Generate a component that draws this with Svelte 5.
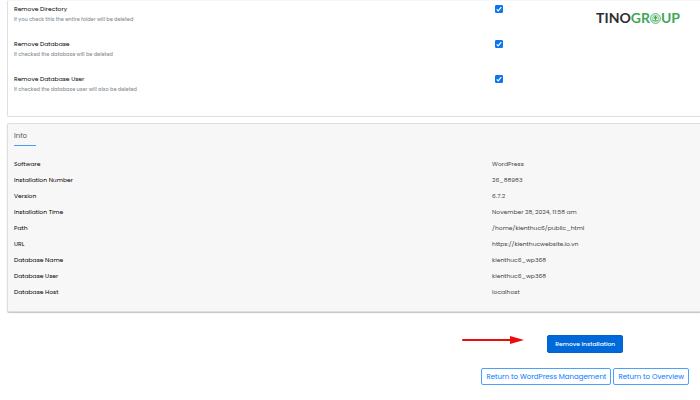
<script>
  let options = $state([
    { id: 'remove-dir', label: 'Remove Directory', hint: 'If you check this the entire folder will be deleted', checked: true },
    { id: 'remove-db', label: 'Remove Database', hint: 'If checked the database will be deleted', checked: true },
    { id: 'remove-dbuser', label: 'Remove Database User', hint: 'If checked the database user will also be deleted', checked: true }
  ]);

  const info = [
    ['Software', 'WordPress'],
    ['Installation Number', '26_88983'],
    ['Version', '6.7.2'],
    ['Installation Time', 'November 28, 2024, 11:58 am'],
    ['Path', '/home/kienthuc6/public_html'],
    ['URL', 'https://kienthucwebsite.io.vn'],
    ['Database Name', 'kienthuc6_wp368'],
    ['Database User', 'kienthuc6_wp368'],
    ['Database Host', 'localhost']
  ];
</script>

<main>
  <section class="panel options">
    {#each options as option (option.id)}
      <div class="option">
        <div>
          <label for={option.id}>{option.label}</label>
          <p id="{option.id}-hint">{option.hint}</p>
        </div>
        <span class="tick">
          <input id={option.id} type="checkbox" aria-describedby="{option.id}-hint" bind:checked={option.checked} />
          <svg viewBox="0 0 8 8" aria-hidden="true"><path d="M1.7 4.3 3.2 5.8 6.3 2.2" /></svg>
        </span>
      </div>
    {/each}
  </section>

  <section class="panel info">
    <h2>Info</h2>
    <table>
      <tbody>
        {#each info as [name, value]}
          <tr>
            <th scope="row">{name}</th>
            <td>{value}</td>
          </tr>
        {/each}
      </tbody>
    </table>
  </section>

  <footer>
    <div class="submit">
      <svg class="arrow" viewBox="0 0 62 10" aria-hidden="true">
        <path d="M1 5H50" />
        <polygon points="48,1 62,5 48,9" />
      </svg>
      <button type="button" class="primary">Remove Installation</button>
    </div>
    <nav>
      <a href="#management">Return to WordPress Management</a>
      <a href="#overview">Return to Overview</a>
    </nav>
  </footer>

  <div class="logo">
    <span class="tino">TINO</span>
    <span class="group">GR<svg viewBox="0 0 12 12" aria-hidden="true">
        <circle cx="6" cy="6" r="5.3" />
        <circle class="ring" cx="6" cy="6" r="3.4" />
        <path class="leaf" d="M6 2.6 8.6 6H6.7V8.2H5.3V6H3.4Z" />
        <path class="ring" d="M2.8 8.2H9.2" />
      </svg>UP</span>
  </div>
</main>

<style>
  :global(body) {
    margin: 0;
    background: #fff;
  }

  main {
    position: relative;
    overflow: hidden;
    font-family: Poppins, Inter, "Liberation Sans", sans-serif;
    font-size: 6px;
    line-height: 8px;
    color: #212529;
  }

  .panel {
    margin-left: 7px;
    padding: 0 3px 0 6px;
    border: 1px solid #dfdfdf;
    border-right: 0;
    border-radius: 2px 0 0 2px;
  }

  .options {
    padding-top: 4px;
    padding-bottom: 6px;
    border-top-color: #f7f7f7;
  }

  .option {
    display: grid;
    grid-template-columns: 7fr 3fr;
    align-items: start;
    height: 35px;
  }

  .option label {
    display: block;
    color: #000;
  }

  .option p {
    margin: 3px 0 0;
    color: #8a9299;
    font-size: 5px;
    font-weight: 500;
  }

  .tick {
    position: relative;
    width: 8px;
    height: 8px;
    margin-left: 3px;
  }

  .tick input {
    appearance: none;
    display: block;
    width: 8px;
    height: 8px;
    margin: 0;
    border: 1px solid #76808a;
    border-radius: 1px;
    background: #fff;
  }

  .tick input:checked {
    border-color: #0d75ee;
    background: #0d75ee;
  }

  .tick svg {
    position: absolute;
    inset: 0;
    pointer-events: none;
  }

  .tick path {
    fill: none;
    stroke: #fff;
    stroke-width: 1.2;
  }

  .info {
    margin-top: 6px;
    padding-top: 7px;
    padding-bottom: 11px;
    background: #f7f7f7;
    box-shadow: 0 1px 1px #c4c4c4;
  }

  h2 {
    width: 22px;
    margin: 0 0 10px;
    padding-bottom: 5px;
    border-bottom: 1px solid #4b9bf5;
    color: #555;
    font-size: 7px;
    font-weight: 400;
    line-height: 9px;
  }

  table {
    width: 100%;
    border-collapse: collapse;
    table-layout: fixed;
  }

  th,
  td {
    height: 16px;
    padding: 0;
    text-align: left;
    vertical-align: middle;
  }

  th {
    width: 70%;
    color: #000;
    font-weight: 400;
  }

  td {
    color: #444;
  }

  footer {
    display: flex;
    flex-direction: column;
    align-items: center;
    width: max-content;
    margin: 23px 11px 0 auto;
    padding-bottom: 14px;
  }

  .submit {
    position: relative;
  }

  .arrow {
    position: absolute;
    top: 0;
    right: 100%;
    width: 62px;
    height: 10px;
    margin-right: 23px;
    fill: #f00a0a;
  }

  .arrow path {
    stroke: #f00a0a;
    stroke-width: 2;
    stroke-linecap: round;
  }

  button {
    display: block;
    height: 18px;
    padding: 0 7px;
    border: 1px solid #0062cc;
    border-radius: 2px;
    background: #0069d9;
    color: #fff;
    font: 500 6px/16px Poppins, Inter, "Liberation Sans", sans-serif;
  }

  nav {
    display: flex;
    gap: 2px;
    margin-top: 15px;
  }

  nav a {
    padding: 0 4px;
    border: 1px solid #4a9fff;
    border-radius: 2px;
    color: #007bff;
    font-size: 7px;
    line-height: 15px;
    text-decoration: none;
  }

  .logo {
    position: absolute;
    top: 9px;
    right: 20px;
    display: flex;
    font-family: Lato, "Open Sans", sans-serif;
    font-size: 14px;
    font-weight: 700;
    line-height: 18px;
  }

  .tino {
    color: #2d2d2f;
  }

  .group {
    display: flex;
    align-items: center;
    color: #3fa757;
  }

  .logo svg {
    width: 11px;
    height: 11px;
    fill: none;
    stroke: #3fa757;
    stroke-width: 1;
  }

  .logo .ring {
    stroke-width: 0.7;
  }

  .logo .leaf {
    fill: #3fa757;
    stroke: none;
  }
</style>
